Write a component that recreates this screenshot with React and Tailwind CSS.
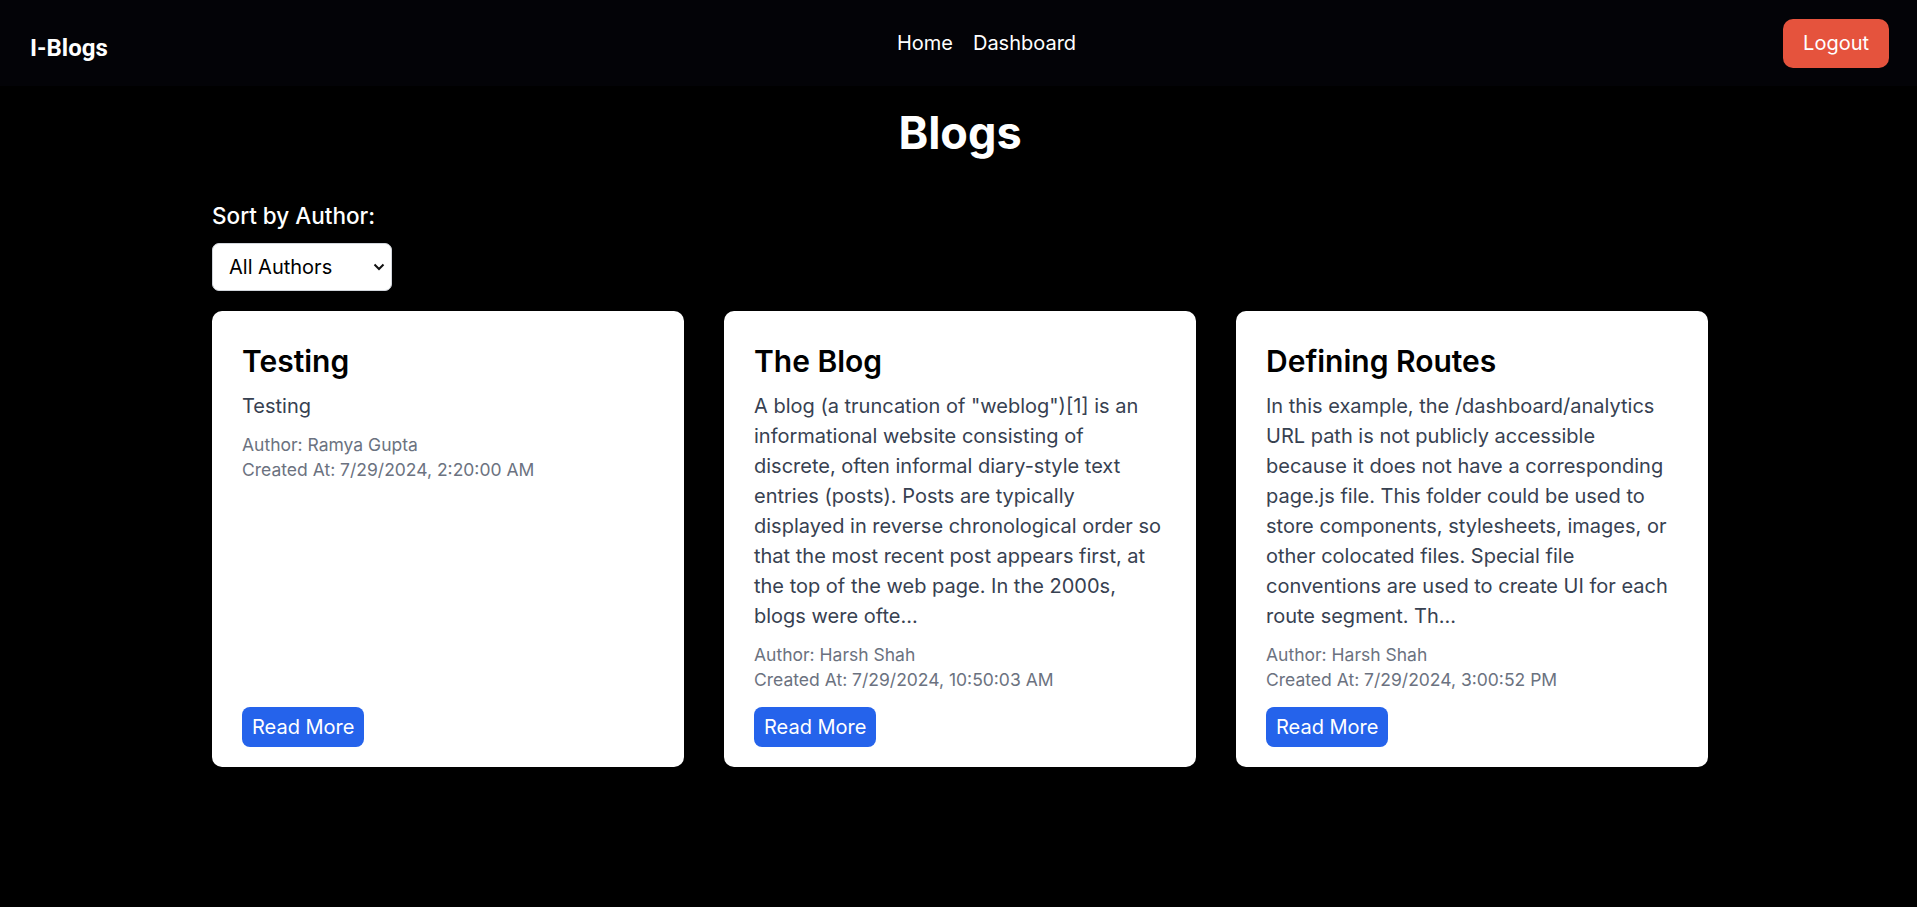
import React from "react";

const blogs = [
  {
    title: "Testing",
    content: "Testing",
    author: "Ramya Gupta",
    createdAt: "7/29/2024, 2:20:00 AM",
  },
  {
    title: "The Blog",
    content:
      'A blog (a truncation of "weblog")[1] is an informational website consisting of discrete, often informal diary-style text entries (posts). Posts are typically displayed in reverse chronological order so that the most recent post appears first, at the top of the web page. In the 2000s, blogs were ofte...',
    author: "Harsh Shah",
    createdAt: "7/29/2024, 10:50:03 AM",
  },
  {
    title: "Defining Routes",
    content:
      "In this example, the /dashboard/analytics URL path is not publicly accessible because it does not have a corresponding page.js file. This folder could be used to store components, stylesheets, images, or other colocated files. Special file conventions are used to create UI for each route segment. Th...",
    author: "Harsh Shah",
    createdAt: "7/29/2024, 3:00:52 PM",
  },
];

const Navbar = () => (
  <header className="h-[86px] bg-[#030307] flex items-center px-[28px]">
    <div className="flex-1">
      <h1 className="font-['Roboto',sans-serif] text-[24px] leading-[35px] font-bold text-white mt-[11px] ml-[2px]">
        I-Blogs
      </h1>
    </div>
    <nav className="flex gap-[20px] text-[20px] leading-[30px] text-white ml-[56px]">
      <a href="#">Home</a>
      <a href="#">Dashboard</a>
    </nav>
    <div className="flex-1 flex justify-end">
      <button className="h-[49px] px-[20px] rounded-[10px] bg-[#e5533d] text-white text-[20px] leading-[30px]">
        Logout
      </button>
    </div>
  </header>
);

const BlogCard = ({ blog }) => (
  <div className="bg-white rounded-[10px] pt-[30px] pb-[20px] px-[30px] flex flex-col h-[456px]">
    <h2 className="text-[30px] leading-[40px] font-semibold text-black mb-[10px]">
      {blog.title}
    </h2>
    <p className="text-[20px] leading-[30px] text-[#374151] mb-[11px]">
      {blog.content}
    </p>
    <p className="text-[17.5px] leading-[25px] text-[#6b7280]">
      Author: {blog.author}
    </p>
    <p className="text-[17.5px] leading-[25px] text-[#6b7280]">
      Created At: {blog.createdAt}
    </p>
    <div className="mt-auto">
      <button className="h-[40px] px-[10px] rounded-[8px] bg-[#2563eb] text-white text-[20px] leading-[30px]">
        Read More
      </button>
    </div>
  </div>
);

export default function App() {
  return (
    <div className="min-h-[907px] bg-black font-['Inter',sans-serif]">
      <Navbar />
      <main className="w-[1496px] ml-[212px] pt-[22px]">
        <h1 className="text-[45px] leading-[50px] font-bold text-white text-center mb-[40px]">
          Blogs
        </h1>
        <label className="block text-[22.5px] leading-[35px] font-medium text-white mb-[10px]">
          Sort by Author:
        </label>
        <div className="relative w-[180px] mb-[20px]">
          <select className="appearance-none w-full h-[48px] bg-white border border-[#d1d5db] rounded-[7px] pl-[16px] text-[20px] text-black outline-none">
            <option>All Authors</option>
            <option>Ramya Gupta</option>
            <option>Harsh Shah</option>
          </select>
          <svg
            className="absolute right-[7px] top-[19px] pointer-events-none"
            width="12"
            height="10"
            viewBox="0 0 12 10"
            fill="none"
          >
            <path d="M1.5 2.5 L6 7 L10.5 2.5" stroke="#111" strokeWidth="2" />
          </svg>
        </div>
        <div className="grid grid-cols-3 gap-[40px]">
          {blogs.map((blog, i) => (
            <BlogCard key={i} blog={blog} />
          ))}
        </div>
      </main>
    </div>
  );
}
